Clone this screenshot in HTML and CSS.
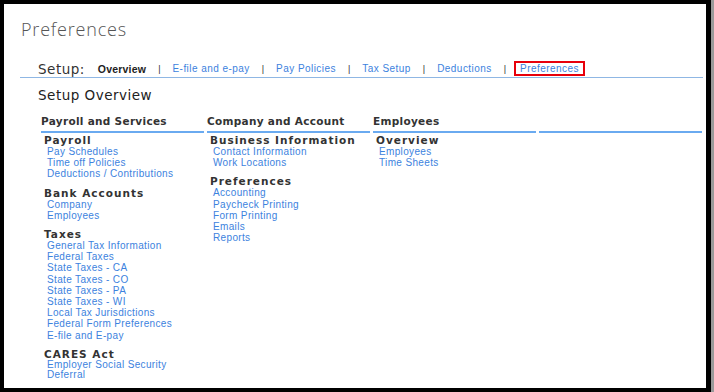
FILE: index.html
```html
<!DOCTYPE html>
<html lang="en">
<head>
    <meta charset="UTF-8">
    <title>Preferences</title>
    <link rel="stylesheet" href="styles.css">
</head>
<body>
    <div class="frame">
        <h1 class="page-title">Preferences</h1>
        <div class="setup-nav">
            <span class="setup-label">Setup:</span>
            <span class="nav-current">Overview</span>
            <span class="sep">|</span>
            <a class="nav-link" href="#">E-file and e-pay</a>
            <span class="sep">|</span>
            <a class="nav-link" href="#">Pay Policies</a>
            <span class="sep">|</span>
            <a class="nav-link" href="#">Tax Setup</a>
            <span class="sep">|</span>
            <a class="nav-link" href="#">Deductions</a>
            <span class="sep">|</span>
            <a class="nav-link marked" href="#">Preferences</a>
        </div>
        <h2 class="section-title">Setup Overview</h2>
        <div class="columns">
            <div class="col">
                <h3 class="col-title">Payroll and Services</h3>
                <div class="group">
                    <h4 class="group-title">Payroll</h4>
                    <a href="#">Pay Schedules</a>
                    <a href="#">Time off Policies</a>
                    <a href="#">Deductions / Contributions</a>
                </div>
                <div class="group">
                    <h4 class="group-title">Bank Accounts</h4>
                    <a href="#">Company</a>
                    <a href="#">Employees</a>
                </div>
                <div class="group">
                    <h4 class="group-title">Taxes</h4>
                    <a href="#">General Tax Information</a>
                    <a href="#">Federal Taxes</a>
                    <a href="#">State Taxes - CA</a>
                    <a href="#">State Taxes - CO</a>
                    <a href="#">State Taxes - PA</a>
                    <a href="#">State Taxes - WI</a>
                    <a href="#">Local Tax Jurisdictions</a>
                    <a href="#">Federal Form Preferences</a>
                    <a href="#">E-file and E-pay</a>
                </div>
                <div class="group">
                    <h4 class="group-title">CARES Act</h4>
                    <a class="wrap-link" href="#">Employer Social Security Deferral</a>
                </div>
            </div>
            <div class="col">
                <h3 class="col-title">Company and Account</h3>
                <div class="group">
                    <h4 class="group-title">Business Information</h4>
                    <a href="#">Contact Information</a>
                    <a href="#">Work Locations</a>
                </div>
                <div class="group">
                    <h4 class="group-title">Preferences</h4>
                    <a href="#">Accounting</a>
                    <a href="#">Paycheck Printing</a>
                    <a href="#">Form Printing</a>
                    <a href="#">Emails</a>
                    <a href="#">Reports</a>
                </div>
            </div>
            <div class="col">
                <h3 class="col-title">Employees</h3>
                <div class="group">
                    <h4 class="group-title">Overview</h4>
                    <a href="#">Employees</a>
                    <a href="#">Time Sheets</a>
                </div>
            </div>
            <div class="col">
                <h3 class="col-title">&nbsp;</h3>
            </div>
        </div>
    </div>
</body>
</html>
```

FILE: styles.css
```css
* {
    margin: 0;
    padding: 0;
    box-sizing: border-box;
}
html, body {
    height: 100%;
}
body {
    background: linear-gradient(to right, #000 711px, #9a9a9a 711px);
    font-family: "Liberation Sans", Arial, sans-serif;
    overflow: hidden;
}
.frame {
    width: 702px;
    height: 384px;
    margin: 4px 0 0 4px;
    background: #fff;
    overflow: hidden;
}
.page-title {
    padding: 14px 0 0 17px;
    font-family: "Open Sans", sans-serif;
    font-weight: 300;
    font-size: 18px;
    line-height: 22px;
    color: #555;
    letter-spacing: 0.8px;
}
.setup-nav {
    display: flex;
    align-items: center;
    height: 20px;
    margin: 18px 3px 0 16px;
    padding: 2px 0 0 18px;
    border-bottom: 1px solid #8fb7e4;
}
.setup-label {
    font-family: "DejaVu Sans", sans-serif;
    font-size: 13.5px;
    color: #333;
    margin-right: 13px;
    letter-spacing: 0.5px;
}
.nav-current {
    font-size: 10.5px;
    font-weight: bold;
    color: #222;
    letter-spacing: 0.2px;
}
.sep {
    font-size: 9px;
    color: #333;
    margin: 0 12px;
}
.nav-link {
    font-size: 10px;
    color: #3c82de;
    text-decoration: none;
    letter-spacing: 0.45px;
}
.nav-link.marked {
    padding: 0 4px;
    border: 2px solid #e8000b;
    margin-left: -4px;
}
.section-title {
    padding: 9px 0 0 34px;
    font-family: "DejaVu Sans", sans-serif;
    font-weight: 400;
    font-size: 13.5px;
    line-height: 16px;
    color: #222;
    letter-spacing: 0.5px;
}
.columns {
    display: flex;
    gap: 3px;
    margin: 10px 3px 0 37px;
}
.col {
    width: 163px;
}
.col-title {
    height: 20px;
    padding-top: 2px;
    font-family: "DejaVu Sans", sans-serif;
    font-size: 10.5px;
    font-weight: bold;
    line-height: 12px;
    color: #333;
    letter-spacing: 0.3px;
    border-bottom: 2px solid #6aaaf0;
}
.group {
    padding: 1px 0 0 3px;
    margin-bottom: 6px;
}
.group-title {
    font-family: "DejaVu Sans", sans-serif;
    font-size: 10.5px;
    font-weight: bold;
    line-height: 12px;
    color: #333;
    letter-spacing: 1px;
}
.group a {
    display: block;
    padding-left: 3px;
    font-size: 10px;
    line-height: 11.2px;
    color: #3c82de;
    text-decoration: none;
    letter-spacing: 0.35px;
}
.group a.wrap-link {
    width: 135px;
    line-height: 10px;
}
```
